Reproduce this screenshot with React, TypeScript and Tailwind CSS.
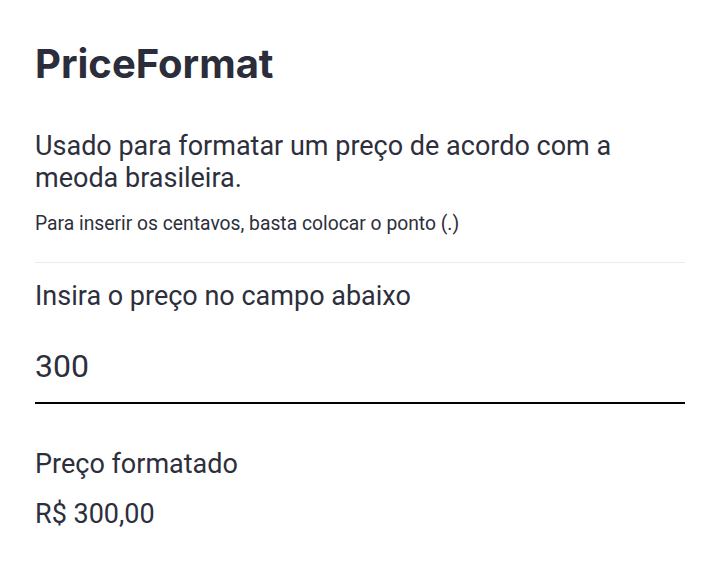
import { useState } from "react";

function formatPrice(raw: string) {
  const value = Number(raw.replace(",", "."));
  if (Number.isNaN(value)) return "R$ 0,00";
  return "R$ " + value.toFixed(2).replace(".", ",").replace(/\B(?=(\d{3})+(?!\d))/g, ".");
}

export default function App() {
  const [price, setPrice] = useState("300");

  return (
    <div className="min-h-screen bg-white px-[35px] pt-[38px] text-[#2d2f3c] font-['Roboto',sans-serif]">
      <h1 className="text-[40px] leading-[52px] font-bold text-[#2b2d3a] font-['Inter',sans-serif]">PriceFormat</h1>
      <p className="mt-[40px] text-[27px] leading-[32px]">
        Usado para formatar um preço de acordo com a meoda brasileira.
      </p>
      <p className="mt-[18px] text-[19.3px] leading-[23px]">Para inserir os centavos, basta colocar o ponto (.)</p>
      <hr className="mt-[27px] border-t border-[#ececec]" />
      <label htmlFor="price" className="mt-[17px] block text-[27px] leading-[32px]">
        Insira o preço no campo abaixo
      </label>
      <input
        id="price"
        autoFocus
        value={price}
        onChange={(e) => setPrice(e.target.value)}
        className="mt-[35px] block w-full border-b-2 border-black pb-[17px] text-[32px] leading-[38px] outline-none caret-black"
      />
      <p className="mt-[44px] text-[27px] leading-[32px]">Preço formatado</p>
      <p className="mt-[18px] text-[27px] leading-[32px]">{formatPrice(price)}</p>
    </div>
  );
}
